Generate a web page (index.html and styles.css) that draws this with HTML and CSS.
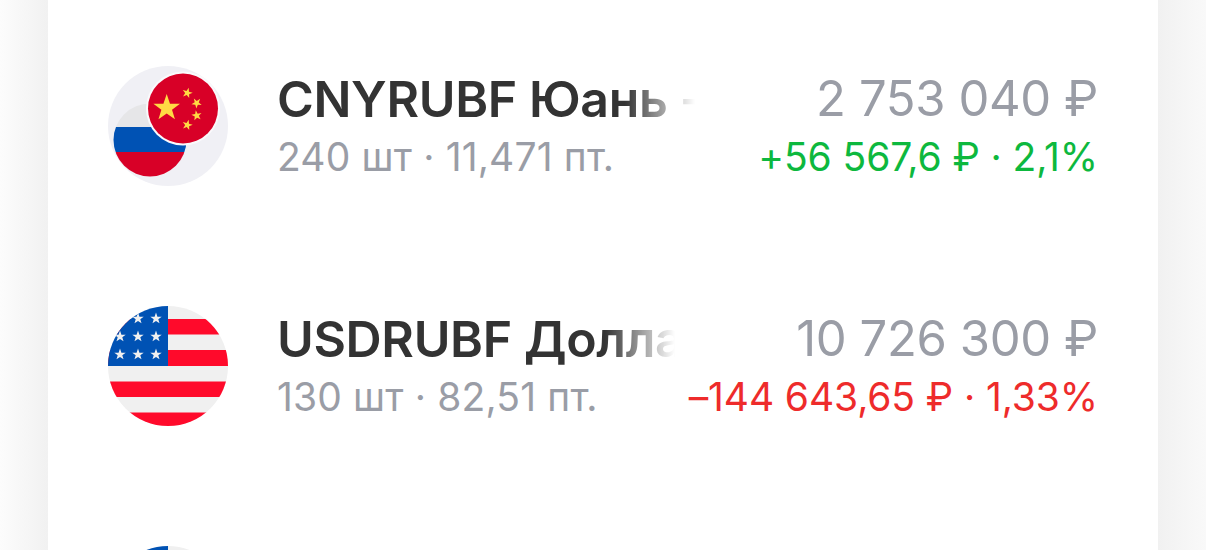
FILE: index.html
```html
<!DOCTYPE html>
<html lang="ru">
<head>
<meta charset="utf-8">
<title>Портфель</title>
<link rel="stylesheet" href="styles.css">
</head>
<body>
<svg class="defs" width="0" height="0" aria-hidden="true">
  <defs>
    <polygon id="star" points="0,-1 0.235,-0.309 0.951,-0.309 0.38,0.118 0.588,0.809 0,0.4 -0.588,0.809 -0.38,0.118 -0.951,-0.309 -0.235,-0.309"/>
    <clipPath id="ru-clip"><circle cx="42" cy="74" r="36.5"/></clipPath>
    <clipPath id="us-clip"><circle cx="60" cy="60" r="60"/></clipPath>
  </defs>
</svg>
<main class="card">
  <section class="row row-first">
    <svg class="icon" viewBox="0 0 120 120">
      <circle cx="60" cy="60" r="60" fill="#f0f0f5"/>
      <g clip-path="url(#ru-clip)">
        <rect x="0" y="30" width="90" height="31" fill="#e6e6e8"/>
        <rect x="0" y="61" width="90" height="25" fill="#0052b4"/>
        <rect x="0" y="86" width="90" height="30" fill="#d80027"/>
      </g>
      <circle cx="75" cy="42.5" r="37" fill="#fafafc"/>
      <circle cx="75" cy="42.5" r="35" fill="#d80027"/>
      <g fill="#ffda44">
        <use href="#star" transform="translate(58.7,42) scale(14)"/>
        <use href="#star" transform="translate(79.3,27) rotate(15) scale(5.4)"/>
        <use href="#star" transform="translate(88.7,37) rotate(40) scale(5.4)"/>
        <use href="#star" transform="translate(88.7,49.5) rotate(-10) scale(5.4)"/>
        <use href="#star" transform="translate(79.3,59) rotate(15) scale(5.4)"/>
      </g>
    </svg>
    <div class="info">
      <div class="name">CNYRUBF Юань - Рубль</div>
      <div class="meta">240 шт · 11,471 пт.</div>
    </div>
    <div class="figures">
      <div class="total">2 753 040 ₽</div>
      <div class="delta up">+56 567,6 ₽ · 2,1%</div>
    </div>
  </section>
  <section class="row row-second">
    <svg class="icon" viewBox="0 0 120 120">
      <g clip-path="url(#us-clip)">
        <rect width="120" height="120" fill="#f0f0f0"/>
        <rect y="13" width="120" height="15.5" fill="#ff0a2b"/>
        <rect y="44" width="120" height="16" fill="#ff0a2b"/>
        <rect y="75.5" width="120" height="15.5" fill="#ff0a2b"/>
        <rect y="106.5" width="120" height="13.5" fill="#ff0a2b"/>
        <rect width="60" height="60" fill="#0052b4"/>
        <g fill="#f0f0f0">
          <use href="#star" transform="translate(30,12.5) scale(6)"/>
          <use href="#star" transform="translate(48,12.5) scale(6)"/>
          <use href="#star" transform="translate(12,30.5) scale(6)"/>
          <use href="#star" transform="translate(30,30.5) scale(6)"/>
          <use href="#star" transform="translate(48,30.5) scale(6)"/>
          <use href="#star" transform="translate(12,48.5) scale(6)"/>
          <use href="#star" transform="translate(30,48.5) scale(6)"/>
          <use href="#star" transform="translate(48,48.5) scale(6)"/>
        </g>
      </g>
    </svg>
    <div class="info">
      <div class="name">USDRUBF Доллар - Рубль</div>
      <div class="meta">130 шт · 82,51 пт.</div>
    </div>
    <div class="figures">
      <div class="total">10 726 300 ₽</div>
      <div class="delta down">–144 643,65 ₽ · 1,33%</div>
    </div>
  </section>
  <section class="row">
    <svg class="icon" viewBox="0 0 120 120">
      <g clip-path="url(#us-clip)">
        <rect width="120" height="120" fill="#f0f0f0"/>
        <rect width="60" height="60" fill="#0052b4"/>
      </g>
    </svg>
  </section>
</main>
</body>
</html>
```
FILE: styles.css
```css
* { box-sizing: border-box; }
html, body { margin: 0; height: 100%; }
body {
  overflow: hidden;
  background: linear-gradient(to right, #fcfcfc 0, #f1f1f1 48px, #f1f1f1 1158px, #f9f9f9 1206px);
  font-family: Inter, "Noto Sans", sans-serif;
}
.defs { position: absolute; }
.card {
  width: 1110px;
  height: 550px;
  margin-left: 48px;
  padding-top: 66px;
  overflow: hidden;
  background: #fff;
}
.row {
  display: flex;
  align-items: center;
  height: 120px;
  margin-bottom: 120px;
  padding: 0 60px;
}
.icon { flex: none; width: 120px; height: 120px; }
.info {
  flex: 1;
  min-width: 0;
  margin-left: 49px;
  overflow: hidden;
}
.row-first .info { margin-right: 63px; }
.row-second .info { margin-right: 14px; }
.name {
  color: #333;
  font-size: 50px;
  font-weight: 600;
  letter-spacing: -0.35px;
  line-height: 62px;
  white-space: nowrap;
  overflow: hidden;
  -webkit-mask-image: linear-gradient(to left, transparent 0, #000 70px);
  mask-image: linear-gradient(to left, transparent 0, #000 70px);
}
.meta, .delta { font-size: 39px; line-height: 54px; white-space: nowrap; }
.meta { color: #9a9da6; letter-spacing: 0.15px; }
.delta { letter-spacing: -0.1px; }
.figures { flex: none; text-align: right; }
.total { color: #9a9da6; font-size: 49px; letter-spacing: -0.4px; line-height: 62px; white-space: nowrap; }
.up { color: #0db83e; }
.down { color: #ee2b2b; }
```
